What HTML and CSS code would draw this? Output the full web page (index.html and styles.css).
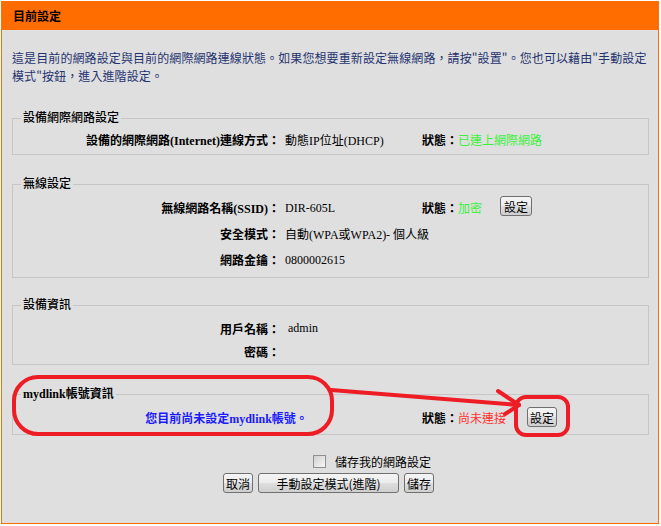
FILE: index.html
```html
<html lang="zh-Hant">
<head>
    <meta charset="UTF-8">
    <title>目前設定</title>
    <link rel="stylesheet" href="styles.css">
</head>
<body>
<div class="panel">
    <div class="panel-head">目前設定</div>
    <div class="panel-body">
        <p class="intro">這是目前的網路設定與目前的網際網路連線狀態。如果您想要重新設定無線網路，請按"設置"。您也可以藉由"手動設定模式"按鈕，進入進階設定。</p>

        <fieldset class="box box-net">
            <legend>設備網際網路設定</legend>
            <div class="row">
                <span class="lbl">設備的網際網路(Internet)連線方式：</span>
                <span class="val">動態IP位址(DHCP)</span>
                <span class="stat"><b>狀態：</b><span class="ok">已連上網際網路</span></span>
            </div>
        </fieldset>

        <fieldset class="box box-wifi">
            <legend>無線設定</legend>
            <div class="row">
                <span class="lbl">無線網路名稱(SSID)：</span>
                <span class="val">DIR-605L</span>
                <span class="stat"><b>狀態：</b><span class="ok">加密</span><button type="button" class="btn btn-set">設定</button></span>
            </div>
            <div class="row">
                <span class="lbl">安全模式：</span>
                <span class="val val-long">自動(WPA或WPA2)- 個人級</span>
            </div>
            <div class="row">
                <span class="lbl">網路金鑰：</span>
                <span class="val val-long">0800002615</span>
            </div>
        </fieldset>

        <fieldset class="box box-dev">
            <legend>設備資訊</legend>
            <div class="row">
                <span class="lbl">用戶名稱：</span>
                <span class="val val-long">&nbsp;admin</span>
            </div>
            <div class="row">
                <span class="lbl">密碼：</span>
                <span class="val val-long"></span>
            </div>
        </fieldset>

        <fieldset class="box box-link">
            <legend><b>mydlink帳號資訊</b></legend>
            <div class="row">
                <span class="msg">您目前尚未設定mydlink帳號。</span>
                <span class="stat"><b>狀態：</b><span class="bad">尚未連接</span><button type="button" class="btn btn-set btn-link">設定</button></span>
            </div>
        </fieldset>

        <div class="save-row">
            <input type="checkbox" class="chk" id="save_net">
            <label for="save_net">儲存我的網路設定</label>
        </div>

        <div class="btn-row">
            <button type="button" class="btn">取消</button>
            <button type="button" class="btn btn-wide">手動設定模式(進階)</button>
            <button type="button" class="btn">儲存</button>
        </div>
    </div>
</div>

<svg class="marks" width="661" height="526" viewBox="0 0 661 526">
    <rect x="14" y="377" width="318" height="57" rx="24" ry="24" />
    <line x1="331" y1="390" x2="519" y2="405" />
    <polyline points="498,391 519,405 505,414" />
    <rect x="516" y="397" width="52" height="38" rx="10" ry="10" />
</svg>
</body>
</html>
```

FILE: styles.css
```css
		body {
			margin: 0;
			position: relative;
			font-family: "Liberation Serif", "Noto Sans CJK TC", serif;
			font-size: 12px;
			color: #000;
		}

		.panel {
			margin: 1px 0 0 1px;
			width: 656px;
			border: 1px solid #ff6c00;
		}

		.panel-head {
			background-color: #ff6c00;
			height: 28px;
			line-height: 28px;
			padding-left: 11px;
			font-family: "Noto Sans CJK TC", sans-serif;
			font-weight: bold;
			font-size: 12px;
		}

		.panel-body {
			background-color: #dfdfdf;
			padding: 19px 9px 30px 10px;
		}

		.intro {
			margin: 0;
			line-height: 18px;
			color: #1f3370;
			letter-spacing: 0.1px;
			font-family: "Noto Sans CJK TC", sans-serif;
		}

		.box {
			margin: 21px 0 0 0;
			padding: 1px 8px 1px 8px;
			border: 1px solid #c6c6c6;
		}
		.box legend {
			padding: 0 2px;
			line-height: 16px;
			font-family: "Liberation Serif", "Noto Sans CJK TC", serif;
			font-weight: 500;
		}
		.box-net {
			margin-top: 25px;
		}
		.box-wifi {
			padding-top: 3px;
			padding-bottom: 4px;
		}
		.box-dev {
			margin-top: 19px;
			padding-top: 4px;
		}
		.box-link .row {
			height: 30px;
		}

		.row {
			display: grid;
			grid-template-columns: 259px 142px auto;
			align-items: center;
			height: 26px;
		}
		.box-dev .row {
			height: 23px;
		}

		.lbl {
			text-align: right;
			font-weight: bold;
			white-space: nowrap;
		}
		.val {
			padding-left: 5px;
			white-space: nowrap;
		}
		.val-long {
			grid-column: 2 / 4;
		}
		.stat {
			display: flex;
			align-items: center;
			white-space: nowrap;
		}
		.ok {
			color: #3cf03c;
		}
		.bad {
			color: #ff3030;
		}
		.msg {
			grid-column: 1 / 3;
			text-align: center;
			padding-left: 10px;
			color: #1a1aff;
			font-weight: bold;
		}

		.btn {
			font-family: "Noto Sans CJK TC", sans-serif;
			font-size: 12px;
			color: #000;
			height: 20px;
			padding: 0 2px;
			border: 1px solid #707070;
			border-radius: 3px;
			background: linear-gradient(#f4f4f4, #ececec 50%, #dedede 50%, #cfcfcf);
			cursor: pointer;
		}
		.btn-set {
			margin-left: 18px;
			margin-top: -4px;
			padding: 0 3px;
		}
		.btn-link {
			margin-left: 21px;
			margin-top: -2px;
			padding: 0 2px;
		}
		.btn-wide {
			width: 141px;
		}

		.save-row {
			margin-top: 16px;
			height: 20px;
			display: flex;
			align-items: center;
			justify-content: center;
			padding-left: 83px;
			font-family: "Noto Sans CJK TC", sans-serif;
		}
		.chk {
			appearance: none;
			width: 13px;
			height: 13px;
			margin: 0 9px 0 0;
			border: 1px solid #8e8f8f;
			background: linear-gradient(135deg, #d0d0d0, #f7f7f7);
		}

		.btn-row {
			margin-top: 2px;
			display: flex;
			justify-content: center;
			gap: 5px;
			padding-right: 4px;
		}

		.marks {
			position: absolute;
			top: 0;
			left: 0;
			pointer-events: none;
		}
		.marks rect, .marks line, .marks polyline {
			fill: none;
			stroke: #ee1c24;
			stroke-width: 4;
			stroke-linecap: round;
			stroke-linejoin: round;
		}
```
